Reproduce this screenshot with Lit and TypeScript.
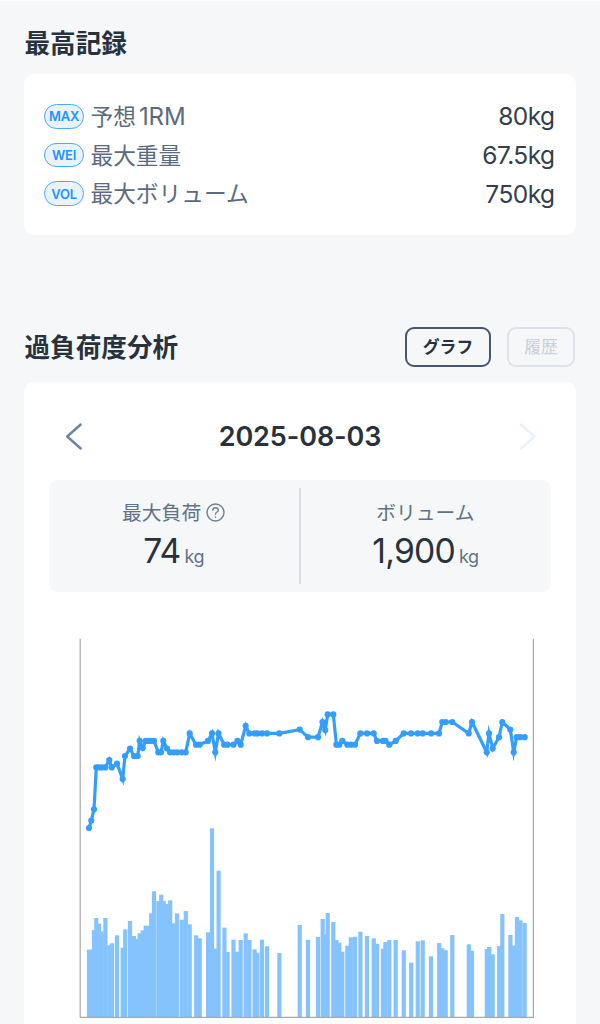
import { LitElement, html, css, svg } from "lit";
import { customElement } from "lit/decorators.js";

type Pair = [number, number];

/* Load line: x, y in chart units (1 unit = 1px, origin at the page's 79,638). */
const LOAD: Pair[] = [
  [89, 828], [91.3, 820.5], [94, 809.3], [96.3, 767.4], [98.7, 767.4], [101.7, 767.4], [105.3, 767.4],
  [109.3, 760], [111.7, 767.4], [117, 763.7], [122.7, 779], [125, 756], [130, 748.5], [134, 756], [137.7, 756],
  [139.7, 740.9], [142.7, 748], [145.7, 740.9], [148.3, 740.9], [151, 740.9], [154, 740.9], [158.3, 752.3],
  [161, 752.3], [163.3, 740.9], [167, 748.5], [170, 752.3], [173.7, 752.3], [177.3, 752.3], [181.7, 752.3],
  [185.7, 752.3], [189.7, 733.4], [196, 744.7], [199.7, 744.7], [208, 740.9], [212, 733.4], [215.3, 752.3],
  [218.5, 733.4], [224.2, 744.7], [227.5, 744.7], [233.5, 744.7], [237.5, 740.9], [240.7, 744.7],
  [245.7, 725.8], [249.3, 733.4], [254.7, 733.4], [257.3, 733.4], [262, 733.4], [267, 733.4], [279.3, 733.4],
  [299.7, 729.6], [308, 737.2], [318, 737.2], [322.5, 722], [325.2, 730], [327.7, 714.4], [333.3, 714.4],
  [336.4, 744.7], [339.3, 744.7], [342.3, 740.9], [347.3, 744.7], [351, 744.7], [355, 744.7], [360.3, 733.4],
  [367, 733.4], [373.7, 733.4], [377, 740.9], [383, 740.9], [385.5, 740.9], [389.3, 744.7], [395.7, 740.9],
  [403.7, 733.4], [411, 733.4], [417.7, 733.4], [422.7, 733.4], [431, 733.4], [439, 733.4], [442.3, 722],
  [445.7, 722], [452.3, 722], [468.7, 733.4], [472, 722], [486.7, 752.3], [489, 733.4], [492.7, 748.5],
  [499, 737.2], [502.3, 722], [510.3, 729.6], [513.7, 752.3], [516.7, 737.2], [520.3, 737.2], [524.7, 737.2],
];

/* Volume bars: centre x, top y. */
const VOLUME: Pair[] = [
  [89, 949.7], [91.5, 949.7], [94, 930], [96.3, 918], [98.9, 923.7], [101.7, 931.3], [105.4, 918],
  [109.3, 945.3], [112, 943.3], [117, 935.3], [122.7, 947.7], [125.2, 929.3], [130, 921], [134, 936],
  [136.8, 939], [139.7, 933.3], [142.7, 930.3], [145.7, 925.7], [148.3, 925.7], [151.2, 913.3], [154, 891.3],
  [158.4, 901], [161.2, 894.7], [163.6, 901], [167, 904], [170.2, 900.3], [173.7, 923.3], [177, 913.3],
  [181.8, 919.7], [185.8, 911], [189.7, 924.3], [196.2, 935.3], [199.8, 938.3], [208.1, 932.3], [212, 828.3],
  [215.4, 948.7], [218.6, 870.7], [224.4, 927.7], [227.6, 952], [233.5, 939.7], [237, 951.7], [240.7, 940],
  [245.7, 933.3], [249.4, 940], [254.6, 949.3], [257.4, 952.7], [262, 939.7], [267, 946.3], [279.4, 953],
  [299.7, 925], [308, 939.8], [318, 937], [322.7, 919], [325.3, 934], [327.7, 913], [333.3, 922], [336.4, 940],
  [339.3, 942.7], [342.3, 951.7], [347.3, 945.7], [350.8, 937.3], [355, 936.7], [360.4, 931.7], [367, 936],
  [373.7, 938.3], [377.1, 943.7], [383, 948.7], [385.4, 942], [389.3, 940], [395.7, 940], [403.8, 950.3],
  [411.2, 962.7], [417.8, 941.3], [422.7, 940.3], [431, 956.3], [439.2, 943], [442.4, 948.3], [445.7, 950.3],
  [452.3, 935], [468.8, 944.3], [472, 950.7], [486.8, 949], [489.2, 947], [492.7, 954.3], [499.2, 946],
  [502.3, 914], [510.4, 935], [513.8, 945.7], [517, 917], [520.5, 920.3], [524.7, 923],
];

const RECORDS = [
  { tag: "MAX", label: html`予想<span class="latin">1RM</span>`, value: "80kg" },
  { tag: "WEI", label: "最大重量", value: "67.5kg" },
  { tag: "VOL", label: "最大ボリューム", value: "750kg" },
];

@customElement("overload-chart")
export class OverloadChart extends LitElement {
  static styles = css`
    :host { display: block; }
    svg { display: block; }
    .frame { fill: none; stroke: #a9a9a9; stroke-width: 1.2; }
    .bar { fill: #85c3ff; }
    .line { fill: none; stroke: #339eff; stroke-width: 3.2; stroke-miterlimit: 10; }
    .dot { fill: #339eff; }
  `;

  render() {
    return html`
      <svg width="456" height="386" viewBox="79 638 456 386">
        ${VOLUME.map(([x, y]) => svg`<rect class="bar" x=${x - 2.1} y=${y} width="4.2" height=${1017.5 - y}></rect>`)}
        <path class="frame" d="M80.2 638.7V1017.4H533.4V638.7"></path>
        <polyline class="line" points=${LOAD.map((p) => p.join(",")).join(" ")}></polyline>
        ${LOAD.map(([x, y]) => svg`<circle class="dot" cx=${x} cy=${y} r="3.1"></circle>`)}
      </svg>
    `;
  }
}

@customElement("app-root")
export class AppRoot extends LitElement {
  static styles = css`
    :host {
      display: block;
      height: 1024px;
      overflow: hidden;
      box-sizing: border-box;
      border-top: 1px solid #fdfdfe;
      background: #f5f7f9;
      color: #28323c;
      font-family: Inter, "Noto Sans CJK JP", sans-serif;
    }
    * { box-sizing: border-box; }
    .page { padding: 23px 24px 0; }
    h2 { margin: 0; padding-left: 0.5px; font-size: 25.6px; line-height: 40px; font-weight: 700; white-space: nowrap; }
    .card { background: #fff; border-radius: 10px; }
    .records { margin-top: 9.5px; height: 161.5px; padding: 23.5px 21.5px 0 20px; }
    .record { display: flex; align-items: center; height: 38.7px; }
    .tag {
      width: 40px; height: 24.5px; border: 1.5px solid #4ba9ff; border-radius: 13px;
      background: #e8f3ff; color: #1f93ff; font-size: 13px; font-weight: 600; letter-spacing: -0.2px;
      display: flex; align-items: center; justify-content: center;
    }
    .label { margin-left: 6.5px; flex: 1; padding-top: 1px; font-size: 22.7px; line-height: 38px; color: #5a6b7f; white-space: nowrap; }
    .latin { margin-left: 3px; font-size: 24px; letter-spacing: -0.1px; }
    .value { font-size: 24.5px; line-height: 38px; color: #333f4c; letter-spacing: -0.55px; }
    .heading { display: flex; align-items: center; margin-top: 92px; height: 40px; padding-right: 1px; }
    .heading h2 { flex: 1; padding-top: 2px; }
    .toggle {
      height: 40px; border: 2px solid #48576a; border-radius: 9px; background: transparent;
      font: 700 16.8px/36px Inter, "Noto Sans CJK JP", sans-serif; color: #28323c; padding: 0; text-align: center;
    }
    .graph { width: 86px; }
    .history { width: 68px; margin-left: 16px; border-color: #dee3ea; color: #c8d0da; font-weight: 400; }
    .analysis { margin-top: 15px; height: 700px; padding: 24px 25px 0; }
    .dates { display: flex; align-items: center; justify-content: space-between; height: 60px; padding: 0 14.5px; }
    .date { padding-top: 1px; font-size: 27px; font-weight: 600; letter-spacing: -0.1px; }
    .arrow { width: 20px; height: 30px; display: block; fill: none; stroke: #6885a2; stroke-width: 2.4; stroke-linecap: round; stroke-linejoin: round; }
    .arrow.off { stroke: #e6f2fd; }
    .summary { display: flex; align-items: center; margin-top: 14px; height: 112px; border-radius: 9px; background: #f5f7f9; }
    .stat { flex: 1; height: 112px; padding-top: 15.5px; }
    .rule { width: 1.5px; height: 96px; background: #dce1e8; }
    .name { display: flex; align-items: center; justify-content: center; height: 32px; padding-right: 1px; font-size: 19.8px; color: #5f7388; }
    .help { width: 19px; height: 19px; margin: 1px 0 0 5px; fill: none; stroke: #6e8196; stroke-width: 1.4; stroke-linecap: round; }
    .amount { display: flex; align-items: baseline; justify-content: center; height: 45px; line-height: 45px; padding-right: 1px; font-size: 33.7px; letter-spacing: -0.8px; }
    .unit { margin-left: 4px; font-size: 18px; letter-spacing: -0.5px; color: #5f7388; }
    .chart { display: block; margin: 45.5px 0 0 30px; }
  `;

  render() {
    return html`
      <main class="page">
        <h2>最高記録</h2>
        <section class="card records">
          ${RECORDS.map((r) => html`
            <div class="record">
              <span class="tag">${r.tag}</span>
              <span class="label">${r.label}</span>
              <span class="value">${r.value}</span>
            </div>`)}
        </section>
        <div class="heading">
          <h2>過負荷度分析</h2>
          <button class="toggle graph">グラフ</button>
          <button class="toggle history">履歴</button>
        </div>
        <section class="card analysis">
          <div class="dates">
            <svg class="arrow" viewBox="0 0 20 30"><path d="M16.7 3.5L3.2 15.5L16.7 27.5"></path></svg>
            <span class="date">2025-08-03</span>
            <svg class="arrow off" viewBox="0 0 20 30"><path d="M4 3.5L17.5 15.5L4 27.5"></path></svg>
          </div>
          <div class="summary">
            <div class="stat">
              <div class="name">最大負荷
                <svg class="help" viewBox="0 0 19 19">
                  <circle cx="9.5" cy="9.5" r="8.5"></circle>
                  <path d="M6.8 7.3C6.8 5.7 8 4.8 9.5 4.8S12.3 5.8 12.3 7.2C12.3 9 9.5 9.1 9.5 11.2M9.5 14V14.2"></path>
                </svg>
              </div>
              <div class="amount">74<span class="unit">kg</span></div>
            </div>
            <div class="rule"></div>
            <div class="stat">
              <div class="name">ボリューム</div>
              <div class="amount">1,900<span class="unit">kg</span></div>
            </div>
          </div>
          <overload-chart class="chart"></overload-chart>
        </section>
      </main>
    `;
  }
}
